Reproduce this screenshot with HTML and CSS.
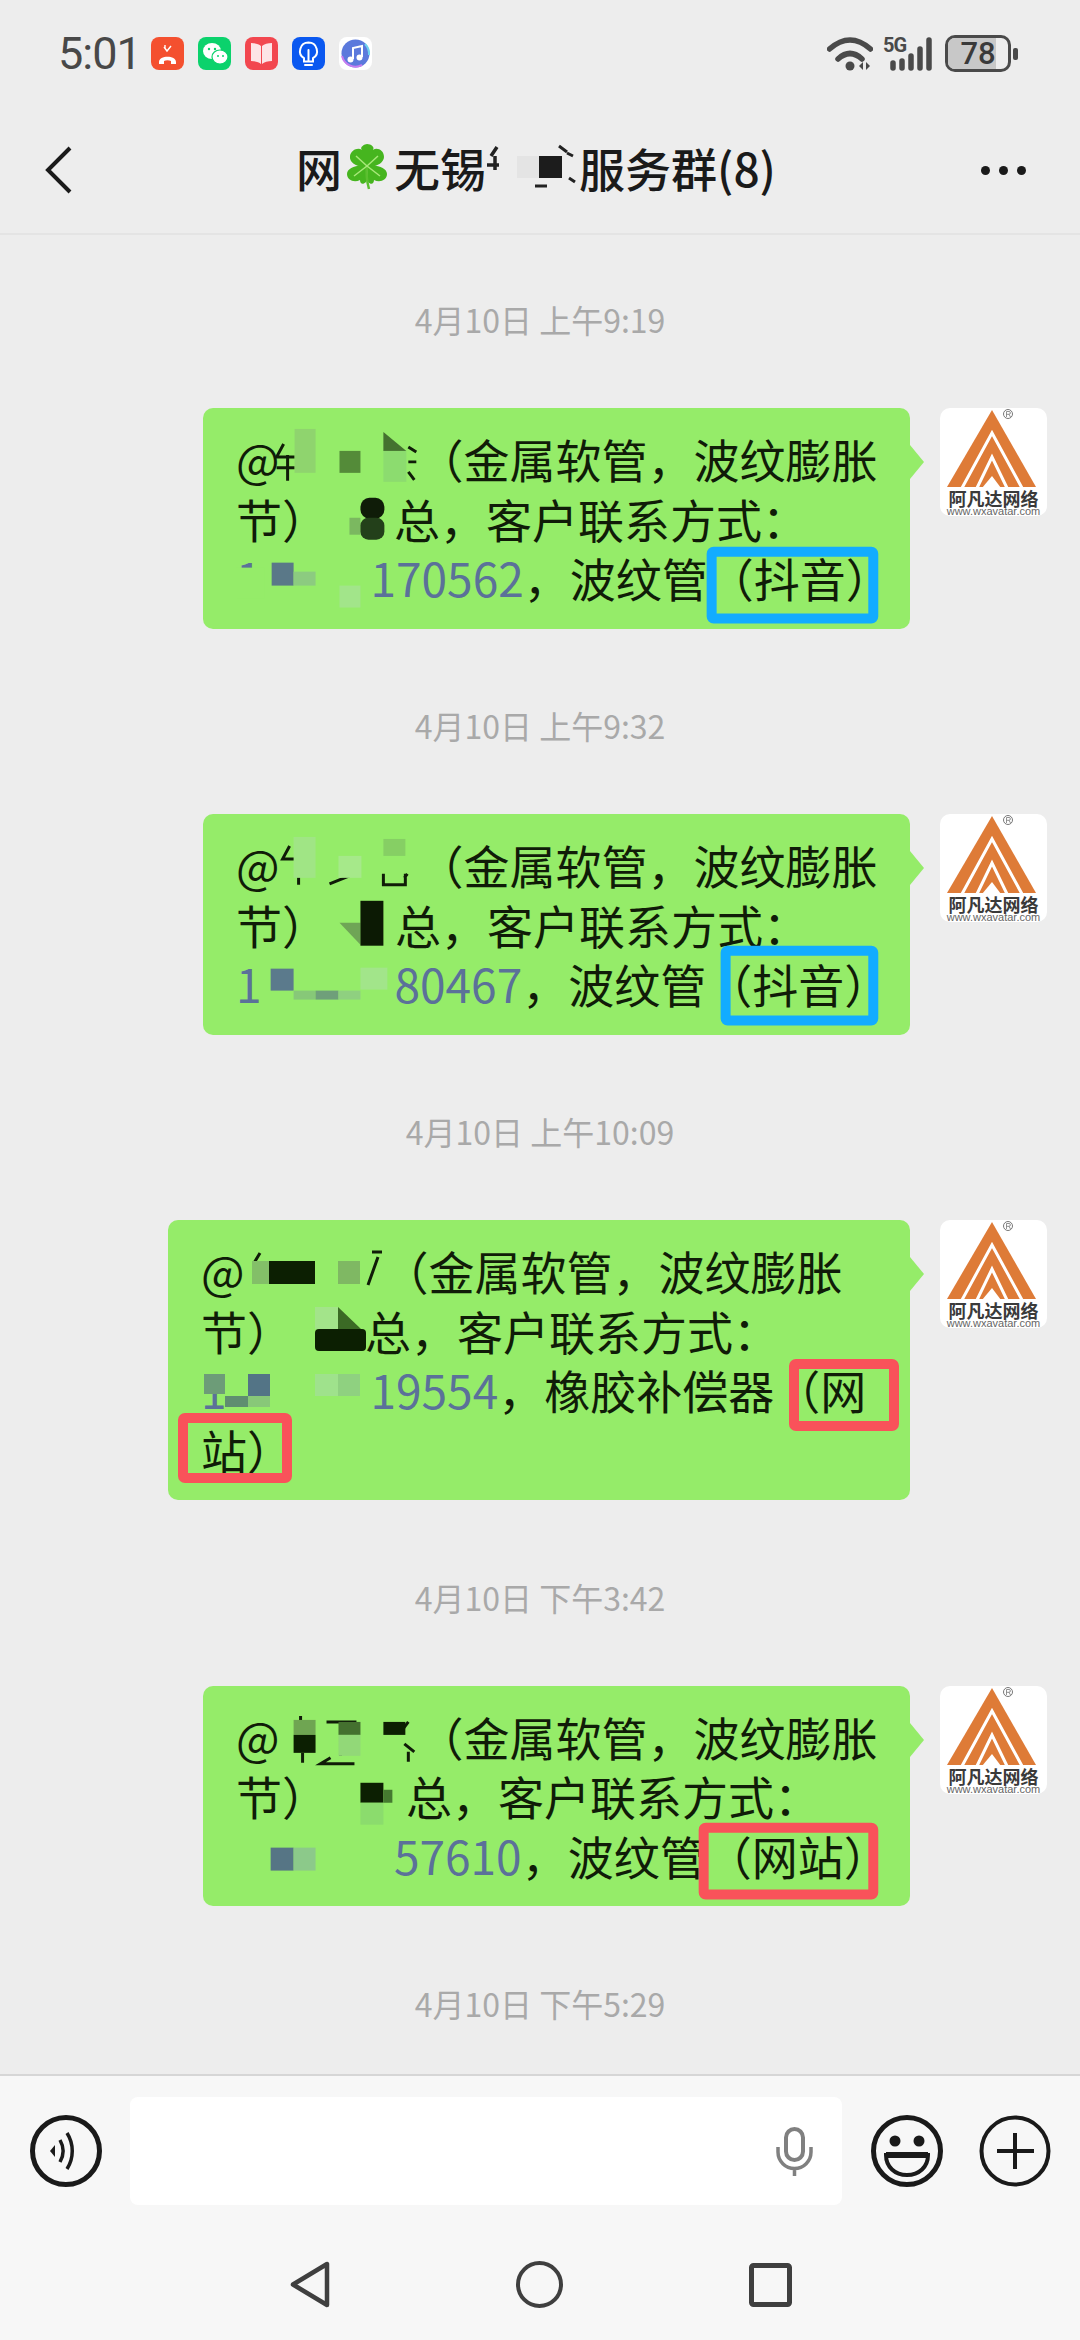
FILE: index.html
```html
<!DOCTYPE html>
<html lang="zh-CN">
<head>
<meta charset="utf-8">
<title>群聊</title>
<link rel="stylesheet" href="styles.css">
</head>
<body>
<div class="phone">
  <header class="status">
    <span class="clock">5:01</span>
    <div class="notifs">
      <svg class="notif" viewBox="0 0 33 33"><rect width="33" height="33" rx="8" fill="#f4502f"/><path d="M8 25c0-7 17-7 17 0v2h-5v-3c-2-1-5-1-7 0v3H8z" fill="#fff"/><path d="M13 10l3 4 4-5M14 8v3" stroke="#fff" stroke-width="1.4" fill="none"/></svg>
      <svg class="notif" viewBox="0 0 33 33"><rect width="33" height="33" rx="8" fill="#0bd26c"/><ellipse cx="14" cy="14" rx="9" ry="8" fill="#fff"/><ellipse cx="22" cy="20" rx="8" ry="7" fill="#fff" stroke="#0bd26c" stroke-width="1.2"/><circle cx="11" cy="12" r="1.2" fill="#0bd26c"/><circle cx="17" cy="12" r="1.2" fill="#0bd26c"/><circle cx="20" cy="19" r="1" fill="#0bd26c"/><circle cx="25" cy="19" r="1" fill="#0bd26c"/></svg>
      <svg class="notif" viewBox="0 0 33 33"><rect width="33" height="33" rx="8" fill="#f2474f"/><path d="M6 6c4 0 8 1 10 3v18c-2-2-6-3-10-3zM27 6c-4 0-8 1-10 3v18c2-2 6-3 10-3z" fill="#fde4e6"/></svg>
      <svg class="notif" viewBox="0 0 33 33"><rect width="33" height="33" rx="8" fill="#0a58f0"/><path d="M16.500 5.500a8.500 8.500 0 0 0-4.500 15.700v3.300h9v-3.300a8.500 8.500 0 0 0-4.500-15.700zM13 28h7M16.500 13v11" stroke="#fff" stroke-width="2" fill="none" stroke-linecap="round"/></svg>
      <svg class="notif" viewBox="0 0 33 33"><rect width="33" height="33" rx="8" fill="#fff"/><circle cx="16.500" cy="16.500" r="14" fill="#5b79dc"/><path d="M3 19a14 14 0 0 0 20 9" stroke="#c77cf0" stroke-width="2" fill="none"/><path d="M26 7a14 14 0 0 1 4 11" stroke="#6fd2ee" stroke-width="2" fill="none"/><path d="M14 22V11l9-2v11" stroke="#fff" stroke-width="2" fill="none"/><circle cx="11.500" cy="22.500" r="3" fill="#fff"/><circle cx="20.500" cy="20.500" r="3" fill="#fff"/></svg>
    </div>
    <div class="sys">
      <svg class="wifi" viewBox="0 0 46 34"><path d="M2.500 12Q23-6 43.500 12M11 22Q23 11 35 22" stroke="#4a4a4a" stroke-width="5.500" fill="none" stroke-linecap="round"/><circle cx="23" cy="29" r="4.500" fill="#4a4a4a"/><path d="M36 25l-4 4 4 4zM39 25l4 4-4 4z" fill="#4a4a4a"/></svg>
      <div class="signal">
        <span class="fiveg">5G</span>
        <svg class="bars" viewBox="0 0 43 34"><g stroke="#4a4a4a" stroke-width="5.500" stroke-linecap="round"><path d="M3 26v5M12 24v7M21 19v12M30 12v19M39 3v28"/></g></svg>
      </div>
      <div class="battery"><span class="fill"></span><span class="level">78</span></div>
      <span class="cap"></span>
    </div>
  </header>

  <nav class="titlebar">
    <svg class="back" viewBox="0 0 30 48"><path d="M26 2L4 24l22 22" stroke="#1a1a1a" stroke-width="4" fill="none"/></svg>
    <h1 class="title">
      <span>网</span>
      <svg class="clover" viewBox="0 0 46 46"><g fill="#46b51f"><path d="M23 22C14 24 5 19 6 12 7 6 14 3 18 6c-3-3 3-6 5-6 4 0 8 3 6 6 4-3 11 0 11 7 0 6-9 11-17 9z"/><path d="M22 22C13 20 3 24 3 30c0 6 7 9 13 6 0 4 3 5 6 2 1-5 1-11 0-16z"/><path d="M24 22c9-2 19 2 19 8 0 6-7 9-13 6 0 4-3 5-6 2-1-5-1-11 0-16z"/></g><path d="M23 22c-1 8 0 16 2 23" stroke="#5bbf2f" stroke-width="2.500" fill="none"/><path d="M23 22L12 12M23 22l11-10M23 22L10 32M23 22l13 10" stroke="#a8e87a" stroke-width="1.500"/></svg>
      <span>无锡</span>
      <span class="title-gap">
        <svg class="title-mask" viewBox="487 147 93 45"><path d="M498 149l-6 9M496 158v14M488 167h12" stroke="#222" stroke-width="3.500" fill="none"/><rect x="518" y="158" width="22" height="22" fill="#e4e4e4"/><rect x="540" y="158" width="23" height="22" fill="#1c1c1c"/><path d="M560 148l8 6M568 155l6 3M570 180l6 4M536 188h12" stroke="#222" stroke-width="3" fill="none"/></svg>
      </span>
      <span>服务群(8)</span>
    </h1>
    <div class="more"><i></i><i></i><i></i></div>
  </nav>

  <main class="chat">
    <p class="time">4月10日 上午9:19</p>
    <div class="row">
      <div class="bubble">
        <div class="line">@<span class="name"></span>（金属软管，波纹膨胀</div>
        <div class="line">节）<span class="gap-a"></span>总，客户联系方式：</div>
        <div class="line"><span class="tel">1<span class="tel-a"></span>170562</span>，波纹管（抖音）</div>
        <svg class="overlay" viewBox="203 408 707 221">
          <path d="M283 444l-7 13h18M287 455v26M276 468h18M408 447l8 5M408 462h8M408 472l6 8" stroke="#101c08" stroke-width="3" fill="none"/>
          <rect x="294" y="429" width="21" height="44" fill="#8fd46e"/>
          <rect x="339" y="451" width="21" height="22" fill="#548b39"/>
          <path d="M383 432l23 19h-23z" fill="#44722f"/>
          <rect x="383" y="451" width="23" height="31" fill="#8cdc6f"/>
          <rect x="349" y="518" width="11" height="17" fill="#7bb860"/>
          <rect x="360" y="498" width="24" height="21" rx="9" fill="#0f1c08"/>
          <rect x="360" y="518" width="24" height="22" rx="8" fill="#23401a"/>
          <rect x="236" y="568" width="28" height="31" fill="#95ec69"/>
          <rect x="271" y="563" width="22" height="23" fill="#5a7888"/>
          <rect x="293" y="572" width="22" height="14" fill="#8ccb80"/>
          <rect x="339" y="586" width="21" height="22" fill="#a2e58a"/>
          <rect x="712" y="552" width="162" height="67" rx="2" fill="none" stroke="#12acff" stroke-width="10"/>
        </svg>
      </div>
      <div class="avatar">
        <svg class="logo" viewBox="0 0 107 82"><path d="M52 2l44 77H7z" fill="#de7b37"/><path d="M22 80L52 25l30 55M37 80l15-31 15 31" stroke="#fff" stroke-width="3" fill="none"/><path d="M42 80l10-12 9 12z" fill="#fff"/><circle cx="68" cy="6" r="4.500" fill="#fff" stroke="#777"/><path d="M66.500 9V3.500h2.500a1.400 1.400 0 0 1 0 2.800h-2.500M69 6.300L70.500 9" stroke="#777" fill="none" stroke-width=".8"/></svg>
        <span class="logo-name">阿凡达网络</span>
        <span class="logo-url">www.wxavatar.com</span>
      </div>
    </div>

    <p class="time">4月10日 上午9:32</p>
    <div class="row">
      <div class="bubble">
        <div class="line">@<span class="name"></span>（金属软管，波纹膨胀</div>
        <div class="line">节）<span class="gap-b"></span>总，客户联系方式：</div>
        <div class="line"><span class="tel">1<span class="tel-e"></span>80467</span>，波纹管（抖音）</div>
        <svg class="overlay" viewBox="203 814 707 221">
          <path d="M289 846l-7 13h18M298 858v27M329 884l20-8M383 874v11h22v-11M407 874l-3 4" stroke="#101c08" stroke-width="3" fill="none"/>
          <rect x="293" y="837" width="22" height="41" fill="#a0e585"/>
          <rect x="383" y="839" width="22" height="17" fill="#86cf64"/>
          <rect x="338" y="856" width="23" height="22" fill="#a6e98a"/>
          <path d="M339 923h21v22z" fill="#6fa556"/>
          <rect x="360" y="901" width="23" height="45" fill="#0c1a04"/>
          <rect x="270" y="969" width="23" height="22" fill="#5b7a8c"/>
          <rect x="293" y="991" width="22" height="9" fill="#87c878"/>
          <rect x="315" y="991" width="23" height="9" fill="#6f9f7a"/>
          <rect x="338" y="991" width="22" height="9" fill="#8fd080"/>
          <rect x="360" y="968" width="27" height="22" fill="#a2e58a"/>
          <rect x="726" y="951" width="148" height="70" rx="2" fill="none" stroke="#12acff" stroke-width="10"/>
        </svg>
      </div>
      <div class="avatar">
        <svg class="logo" viewBox="0 0 107 82"><path d="M52 2l44 77H7z" fill="#de7b37"/><path d="M22 80L52 25l30 55M37 80l15-31 15 31" stroke="#fff" stroke-width="3" fill="none"/><path d="M42 80l10-12 9 12z" fill="#fff"/><circle cx="68" cy="6" r="4.500" fill="#fff" stroke="#777"/><path d="M66.500 9V3.500h2.500a1.400 1.400 0 0 1 0 2.800h-2.500M69 6.300L70.500 9" stroke="#777" fill="none" stroke-width=".8"/></svg>
        <span class="logo-name">阿凡达网络</span>
        <span class="logo-url">www.wxavatar.com</span>
      </div>
    </div>

    <p class="time">4月10日 上午10:09</p>
    <div class="row">
      <div class="bubble wide">
        <div class="line">@<span class="name"></span>（金属软管，波纹膨胀</div>
        <div class="line">节）<span class="gap-c"></span>总，客户联系方式：</div>
        <div class="line"><span class="tel">1<span class="tel-c"></span>19554</span>，橡胶补偿器（网</div>
        <div class="line">站）</div>
        <svg class="overlay" viewBox="168 1221 742 280">
          <path d="M260 1254l-6 10M372 1253h10M378 1258l-10 28" stroke="#101c08" stroke-width="3" fill="none"/>
          <rect x="252" y="1262" width="17" height="23" fill="#83bf68"/>
          <rect x="269" y="1262" width="46" height="23" fill="#0c1f02"/>
          <rect x="338" y="1262" width="22" height="23" fill="#7fb863"/>
          <rect x="315" y="1308" width="23" height="22" fill="#a3e48a"/>
          <path d="M338 1308l23 22h-23z" fill="#3b6a25"/>
          <rect x="315" y="1330" width="51" height="22" rx="4" fill="#0c1f02"/>
          <path d="M204 1375h21v20h-21z" fill="#6d9c78"/>
          <rect x="248" y="1375" width="22" height="22" fill="#537486"/>
          <rect x="225" y="1397" width="23" height="11" fill="#5f8e70"/>
          <rect x="248" y="1397" width="22" height="11" fill="#88c878"/>
          <rect x="315" y="1375" width="23" height="22" fill="#9fe28c"/>
          <rect x="338" y="1375" width="22" height="22" fill="#8fd180"/>
          <rect x="794" y="1365" width="100" height="62" rx="2" fill="none" stroke="#f9525a" stroke-width="10"/>
          <rect x="183" y="1419" width="104" height="60" rx="2" fill="none" stroke="#f9525a" stroke-width="10"/>
        </svg>
      </div>
      <div class="avatar">
        <svg class="logo" viewBox="0 0 107 82"><path d="M52 2l44 77H7z" fill="#de7b37"/><path d="M22 80L52 25l30 55M37 80l15-31 15 31" stroke="#fff" stroke-width="3" fill="none"/><path d="M42 80l10-12 9 12z" fill="#fff"/><circle cx="68" cy="6" r="4.500" fill="#fff" stroke="#777"/><path d="M66.500 9V3.500h2.500a1.400 1.400 0 0 1 0 2.800h-2.500M69 6.300L70.500 9" stroke="#777" fill="none" stroke-width=".8"/></svg>
        <span class="logo-name">阿凡达网络</span>
        <span class="logo-url">www.wxavatar.com</span>
      </div>
    </div>

    <p class="time">4月10日 下午3:42</p>
    <div class="row">
      <div class="bubble">
        <div class="line">@<span class="name"></span>（金属软管，波纹膨胀</div>
        <div class="line">节）<span class="gap-d"></span>总，客户联系方式：</div>
        <div class="line"><span class="tel"><span class="tel-b"></span>57610</span>，波纹管（网站）</div>
        <svg class="overlay" viewBox="203 1686 707 221">
          <path d="M300 1716v8M302 1753v10M326 1722h30M330 1758l-10 6h34M340 1736v20M408 1722l-6 8M404 1744l10 8M408 1752v10" stroke="#101c08" stroke-width="3" fill="none"/>
          <rect x="293" y="1720" width="22" height="15" fill="#6fa552"/>
          <rect x="293" y="1735" width="22" height="18" fill="#0c1f02"/>
          <rect x="338" y="1722" width="22" height="13" fill="#44702f"/>
          <rect x="338" y="1735" width="22" height="21" fill="#92d878"/>
          <rect x="383" y="1722" width="22" height="13" fill="#0c1f02"/>
          <rect x="360" y="1783" width="23" height="20" fill="#0c1f02"/>
          <rect x="383" y="1790" width="9" height="13" fill="#457a30"/>
          <rect x="360" y="1803" width="23" height="22" fill="#8bdc6d"/>
          <rect x="270" y="1848" width="23" height="23" fill="#567585"/>
          <rect x="293" y="1848" width="22" height="23" fill="#8cc98a"/>
          <rect x="704" y="1828" width="170" height="67" rx="2" fill="none" stroke="#f9525a" stroke-width="10"/>
        </svg>
      </div>
      <div class="avatar">
        <svg class="logo" viewBox="0 0 107 82"><path d="M52 2l44 77H7z" fill="#de7b37"/><path d="M22 80L52 25l30 55M37 80l15-31 15 31" stroke="#fff" stroke-width="3" fill="none"/><path d="M42 80l10-12 9 12z" fill="#fff"/><circle cx="68" cy="6" r="4.500" fill="#fff" stroke="#777"/><path d="M66.500 9V3.500h2.500a1.400 1.400 0 0 1 0 2.800h-2.500M69 6.300L70.500 9" stroke="#777" fill="none" stroke-width=".8"/></svg>
        <span class="logo-name">阿凡达网络</span>
        <span class="logo-url">www.wxavatar.com</span>
      </div>
    </div>

    <p class="time">4月10日 下午5:29</p>
  </main>

  <footer class="bar">
    <div class="inputs">
      <svg class="round" viewBox="0 0 72 72"><circle cx="36" cy="36" r="33.500" fill="none" stroke="#1a1a1a" stroke-width="5"/><path d="M20 36l5-6v12z" fill="#1a1a1a"/><path d="M30 25c4 7 4 15 0 22M37 18c7 11 7 25 0 36" stroke="#1a1a1a" stroke-width="3.500" fill="none"/></svg>
      <div class="field">
        <svg class="mic" viewBox="0 0 37 49"><rect x="10" y="2" width="17" height="31" rx="8.500" fill="none" stroke="#808080" stroke-width="4"/><path d="M2 20v5a16.500 16.500 0 0 0 33 0v-5M18.500 41v8" fill="none" stroke="#808080" stroke-width="3.500"/></svg>
      </div>
      <svg class="round" viewBox="0 0 72 72"><circle cx="36" cy="36" r="33.500" fill="none" stroke="#1a1a1a" stroke-width="5"/><circle cx="24" cy="26" r="5.500" fill="#1a1a1a"/><circle cx="48" cy="26" r="5.500" fill="#1a1a1a"/><path d="M15 40h42c0 12-9 20-21 20S15 52 15 40z" fill="none" stroke="#1a1a1a" stroke-width="4"/><path d="M15 40h42" stroke="#1a1a1a" stroke-width="6"/></svg>
      <svg class="round" viewBox="0 0 72 72"><circle cx="36" cy="36" r="33.500" fill="none" stroke="#1a1a1a" stroke-width="4"/><path d="M18 36h37M36 18v36" stroke="#1a1a1a" stroke-width="4"/></svg>
    </div>
    <div class="softkeys">
      <svg class="key-back" viewBox="0 0 41 47"><path d="M38 3v41L4 23.500z" fill="none" stroke="#3f3f3f" stroke-width="4.500" stroke-linejoin="round"/></svg>
      <svg class="key-home" viewBox="0 0 47 47"><circle cx="23.500" cy="23.500" r="21.500" fill="none" stroke="#3f3f3f" stroke-width="4"/></svg>
      <svg class="key-recent" viewBox="0 0 43 44"><rect x="2.500" y="2.500" width="38" height="39" rx="2" fill="none" stroke="#3f3f3f" stroke-width="5"/></svg>
    </div>
  </footer>
</div>
</body>
</html>
```
FILE: styles.css
```css
* { box-sizing: border-box; }
html, body { margin: 0; padding: 0; }
body { background: #ededed; font-family: "Noto Sans CJK SC", "Noto Sans", sans-serif; }
.phone { width: 1080px; height: 2340px; display: flex; flex-direction: column; overflow: hidden; background: #ededed; }

.status { height: 107px; flex: none; display: flex; align-items: center; padding: 0 62px 0 58px; }
.clock { font-family: Roboto, sans-serif; font-size: 45px; letter-spacing: -1px; color: #484848; width: 93px; }
.notifs { display: flex; gap: 14px; }
.notif { width: 33px; height: 33px; display: block; }
.sys { margin-left: auto; display: flex; align-items: center; }
.wifi { width: 46px; height: 34px; display: block; }
.signal { position: relative; width: 50px; height: 34px; margin-left: 10px; }
.fiveg { position: absolute; left: 0; top: -1px; font-family: Roboto, sans-serif; font-size: 20px; font-weight: 700; color: #4a4a4a; letter-spacing: -1px; line-height: 18px; }
.bars { position: absolute; left: 7px; top: 0; width: 43px; height: 34px; display: block; }
.battery { position: relative; width: 66px; height: 37px; margin-left: 12px; border: 3px solid #4a4a4a; border-radius: 10px; overflow: hidden; display: flex; align-items: center; justify-content: center; }
.fill { position: absolute; left: 0; top: 0; bottom: 0; width: 48px; background: #c8c8c8; }
.level { position: relative; font-family: Roboto, sans-serif; font-size: 31px; font-weight: 500; color: #3a3a3a; line-height: 1; }
.cap { width: 5px; height: 12px; margin-left: 2px; border-radius: 2px; background: #4a4a4a; }

.titlebar { height: 128px; flex: none; display: flex; align-items: center; position: relative; padding: 0 54px 0 44px; border-bottom: 2px solid #e4e4e4; }
.back { width: 30px; height: 48px; display: block; }
.title { position: absolute; left: 296px; top: 32px; margin: 0; display: flex; align-items: center; font-size: 46px; font-weight: 500; color: #1a1a1a; line-height: 56px; white-space: nowrap; }
.clover { width: 46px; height: 46px; margin: 0 4px 0 2px; display: block; }
.title-gap { position: relative; width: 93px; height: 45px; display: block; }
.title-mask { position: absolute; left: 0; top: 0; width: 93px; height: 45px; display: block; overflow: visible; }
.more { margin-left: auto; display: flex; gap: 9px; }
.more i { width: 9px; height: 9px; border-radius: 50%; background: #1a1a1a; display: block; }

.chat { flex: 1; min-height: 0; overflow: hidden; padding-top: 64px; }
.time { margin: 0; height: 40px; line-height: 40px; text-align: center; font-size: 32px; color: #a9a9a9; }
.row { display: flex; justify-content: flex-end; align-items: flex-start; gap: 30px; padding-right: 33px; margin: 69px 0 76.5px; }
.bubble { position: relative; width: 707px; padding: 21px 0 21px 33px; background: #95ec69; border-radius: 10px; }
.bubble.wide { width: 742px; }
.bubble::after { content: ""; position: absolute; right: -14px; top: 37px; border-left: 14px solid #95ec69; border-top: 17px solid transparent; border-bottom: 17px solid transparent; }
.line { height: 59.5px; line-height: 59.5px; font-size: 46px; color: #101c08; white-space: nowrap; }
.name { display: inline-block; width: 138px; }
.gap-a { display: inline-block; width: 66px; }
.gap-b { display: inline-block; width: 67px; }
.gap-c { display: inline-block; width: 72px; }
.gap-d { display: inline-block; width: 78px; }
.tel { color: #5b7199; }
.tel-a { display: inline-block; width: 109px; }
.tel-b { display: inline-block; width: 158px; }
.tel-c { display: inline-block; width: 144px; }
.tel-e { display: inline-block; width: 133px; }
.overlay { position: absolute; left: 0; top: 0; width: 100%; height: 100%; display: block; pointer-events: none; }

.avatar { width: 107px; height: 108px; flex: none; background: #fff; border-radius: 10px; display: flex; flex-direction: column; align-items: center; overflow: hidden; }
.logo { width: 107px; height: 82px; flex: none; display: block; }
.logo-name { font-size: 18px; font-weight: 700; line-height: 17px; color: #3a3a3a; white-space: nowrap; }
.logo-url { font-family: "Liberation Sans", sans-serif; font-size: 11px; line-height: 9px; color: #666; white-space: nowrap; }

.bar { height: 266px; flex: none; background: #f7f7f7; border-top: 2px solid #d6d6d6; padding-top: 21px; }
.inputs { display: flex; align-items: center; padding-left: 30px; }
.round { width: 72px; height: 72px; flex: none; display: block; }
.round:nth-child(3) { margin-left: 29px; }
.round:nth-child(4) { margin-left: 36px; }
.field { width: 712px; height: 108px; margin-left: 28px; background: #fff; border-radius: 8px; display: flex; align-items: center; justify-content: flex-end; padding-right: 29px; }
.mic { width: 37px; height: 49px; display: block; }
.softkeys { display: flex; justify-content: center; align-items: center; gap: 186px; margin-top: 56px; }
.key-back { width: 41px; height: 47px; display: block; }
.key-home { width: 47px; height: 47px; display: block; }
.key-recent { width: 43px; height: 44px; display: block; }
```
